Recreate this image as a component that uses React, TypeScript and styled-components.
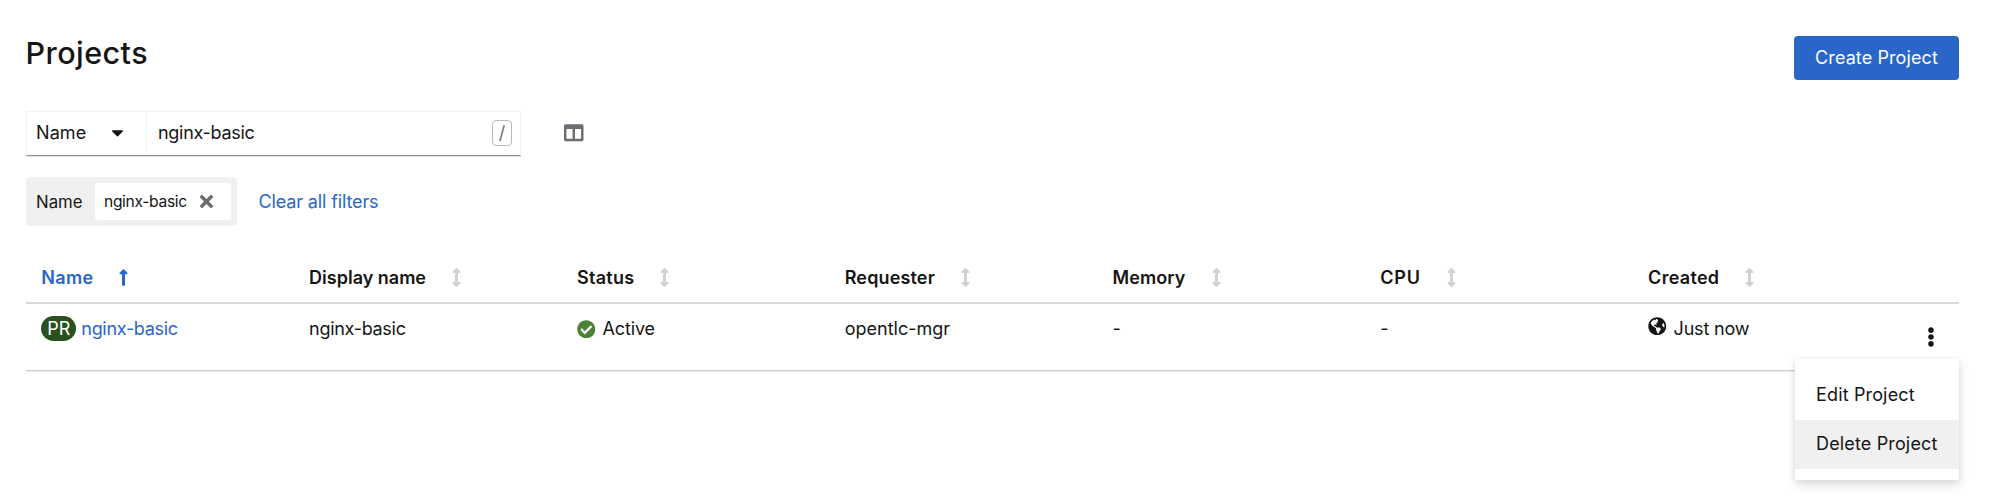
import React from "react";
import styled, { createGlobalStyle, css } from "styled-components";
import {
  FaArrowsAltV,
  FaCaretDown,
  FaCheckCircle,
  FaColumns,
  FaEllipsisV,
  FaGlobeAmericas,
  FaLongArrowAltUp,
  FaTimes,
} from "react-icons/fa";

const GlobalStyle = createGlobalStyle`
  * { box-sizing: border-box; }
  body {
    margin: 0;
    background: #fff;
    color: #151515;
    font: 400 18px/28px Inter, "Liberation Sans", sans-serif;
  }
  button { font: inherit; color: inherit; border: 0; background: none; padding: 0; }
  svg { display: block; flex: none; }
`;

const Page = styled.main`
  height: 502px;
  padding: 33px 40px 0 25.5px;
`;

const Header = styled.header`
  display: flex;
  justify-content: space-between;
  align-items: flex-start;
  height: 78px;
`;

const Title = styled.h1`
  margin: 0;
  font-size: 30.5px;
  line-height: 40px;
  font-weight: 500;
  letter-spacing: 0.45px;
`;

const Label = styled.span<{ $track?: number }>`
  letter-spacing: ${({ $track = 0 }) => $track}px;
  white-space: nowrap;
`;

const PrimaryButton = styled.button`
  width: 165px;
  height: 44px;
  margin-top: 3px;
  border-radius: 4px;
  background: #2966c8;
  color: #fff;
`;

const Toolbar = styled.div`
  display: flex;
  align-items: center;
  height: 45px;
`;

const FilterGroup = styled.div`
  display: flex;
  width: 495.5px;
  height: 45px;
  padding-bottom: 1px;
  border: 1px solid #f0f0f0;
  border-bottom: 1px solid #8f9195;
  box-shadow: 0 1px 0 #e2e2e3;
  margin-bottom: 1px;
`;

const FilterSelect = styled.button`
  display: flex;
  align-items: center;
  justify-content: space-between;
  width: 120.5px;
  padding: 0 19.5px 0 9.5px;
  border-right: 1px solid #f0f0f0;
`;

const SearchField = styled.div`
  display: flex;
  flex: 1;
  align-items: center;
  justify-content: space-between;
  padding: 0 8px 0 11px;
`;

const Key = styled.kbd`
  width: 20px;
  height: 26px;
  border: 1px solid #b8b9bb;
  border-radius: 4px;
  color: #6a6e73;
  font: 18px/23px Inter, sans-serif;
  text-align: center;
`;

const ColumnsButton = styled.button`
  margin: 0 0 2px 43px;
  color: #6a6e73;
`;

const Filters = styled.div`
  display: flex;
  align-items: center;
  margin-top: 21px;
  height: 49px;
`;

const ChipGroup = styled.div`
  display: flex;
  align-items: center;
  width: 211.5px;
  height: 49px;
  padding: 0 6px 0 10.5px;
  border-radius: 4px;
  background: #f0f0f0;
  font-size: 16.8px;
`;

const Chip = styled.div`
  display: flex;
  align-items: center;
  justify-content: space-between;
  width: 136px;
  height: 37px;
  margin-left: auto;
  padding: 0 15px 0 9px;
  border-radius: 3px;
  background: #fff;
  font-size: 15.6px;
  svg { color: #6a6e73; }
`;

const link = css`
  color: #2966c8;
`;

const ClearButton = styled.button`
  ${link}
  margin-left: 21.5px;
`;

const Row = styled.div<{ $head?: boolean }>`
  position: relative;
  display: grid;
  grid-template-columns: repeat(7, 267.8px) 1fr;
  align-items: ${({ $head }) => ($head ? "center" : "start")};
  height: ${({ $head }) => ($head ? 53 : 67)}px;
  padding-top: ${({ $head }) => ($head ? 3 : 0)}px;
  border-bottom: ${({ $head }) => ($head ? "2px solid #dadada" : "1px solid #d0d0d0")};
  box-shadow: ${({ $head }) => ($head ? "none" : "0 1px 0 #ececec")};
  font-weight: ${({ $head }) => ($head ? 600 : 400)};
`;

const Table = styled.section`
  margin-top: 25px;
`;

const Cell = styled.div<{ $gap?: number }>`
  display: flex;
  align-items: center;
  gap: ${({ $gap = 0 }) => $gap}px;
  padding-left: 15.8px;
`;

const HeadCell = styled(Cell)<{ $sorted?: boolean }>`
  gap: 21px;
  ${({ $sorted }) => $sorted && link}
  svg {
    color: ${({ $sorted }) => ($sorted ? "#2966c8" : "#d2d2d2")};
    margin-bottom: 1px;
  }
`;

const BodyCell = styled(Cell)`
  margin-top: 11px;
`;

const ProjectBadge = styled.span`
  width: 35px;
  height: 25px;
  margin-bottom: 2px;
  border-radius: 13px;
  background: #2b5020;
  color: #fff;
  line-height: 25px;
  text-align: center;
`;

const ProjectLink = styled.a`
  ${link}
  letter-spacing: -0.3px;
`;

const GlobeSlot = styled.span`
  padding-bottom: 6px;
`;

const Actions = styled.div`
  justify-self: end;
  margin: 23px 18.5px 0 0;
`;

const Menu = styled.div`
  position: absolute;
  top: 55px;
  right: 0;
  width: 164px;
  height: 121px;
  padding-top: 12px;
  background: #fff;
  box-shadow: 0 5px 10px rgba(3, 3, 3, 0.13), 0 0 6px rgba(3, 3, 3, 0.07);
`;

const MenuItem = styled.button<{ $active?: boolean }>`
  display: block;
  width: 100%;
  height: 49px;
  padding: 0 0 1px 21px;
  text-align: left;
  background: ${({ $active }) => ($active ? "#f0f0f0" : "#fff")};
`;

const columns = [
  { name: "Name", track: 0.3 },
  { name: "Display name", track: 0 },
  { name: "Status", track: 0.3 },
  { name: "Requester", track: 0.15 },
  { name: "Memory", track: 0.1 },
  { name: "CPU", track: 0.8 },
  { name: "Created", track: 0.3 },
];

export default function App() {
  return (
    <Page>
      <GlobalStyle />
      <Header>
        <Title>Projects</Title>
        <PrimaryButton><Label $track={0.1}>Create Project</Label></PrimaryButton>
      </Header>
      <Toolbar>
        <FilterGroup>
          <FilterSelect>
            <Label $track={0.1}>Name</Label>
            <FaCaretDown size={19} />
          </FilterSelect>
          <SearchField>
            <Label $track={-0.3}>nginx-basic</Label>
            <Key>/</Key>
          </SearchField>
        </FilterGroup>
        <ColumnsButton><FaColumns size={19.5} /></ColumnsButton>
      </Toolbar>
      <Filters>
        <ChipGroup>
          <Label>Name</Label>
          <Chip>
            <Label $track={-0.33}>nginx-basic</Label>
            <FaTimes size={19} />
          </Chip>
        </ChipGroup>
        <ClearButton><Label $track={-0.13}>Clear all filters</Label></ClearButton>
      </Filters>
      <Table>
        <Row $head>
          {columns.map(({ name, track }, i) => (
            <HeadCell key={name} $sorted={i === 0}>
              <Label $track={track}>{name}</Label>
              {i === 0 ? <FaLongArrowAltUp size={19} /> : <FaArrowsAltV size={19} />}
            </HeadCell>
          ))}
        </Row>
        <Row>
          <BodyCell $gap={5}>
            <ProjectBadge>PR</ProjectBadge>
            <ProjectLink>nginx-basic</ProjectLink>
          </BodyCell>
          <BodyCell><Label $track={-0.3}>nginx-basic</Label></BodyCell>
          <BodyCell $gap={7}>
            <FaCheckCircle size={18.5} color="#4b8237" />
            <Label $track={-0.1}>Active</Label>
          </BodyCell>
          <BodyCell><Label>opentlc-mgr</Label></BodyCell>
          <BodyCell>-</BodyCell>
          <BodyCell>-</BodyCell>
          <BodyCell $gap={7}>
            <GlobeSlot><FaGlobeAmericas size={18.5} /></GlobeSlot>
            <Label $track={-0.2}>Just now</Label>
          </BodyCell>
          <Actions><FaEllipsisV size={20} /></Actions>
          <Menu>
            <MenuItem><Label $track={0.15}>Edit Project</Label></MenuItem>
            <MenuItem $active><Label $track={0.15}>Delete Project</Label></MenuItem>
          </Menu>
        </Row>
      </Table>
    </Page>
  );
}
